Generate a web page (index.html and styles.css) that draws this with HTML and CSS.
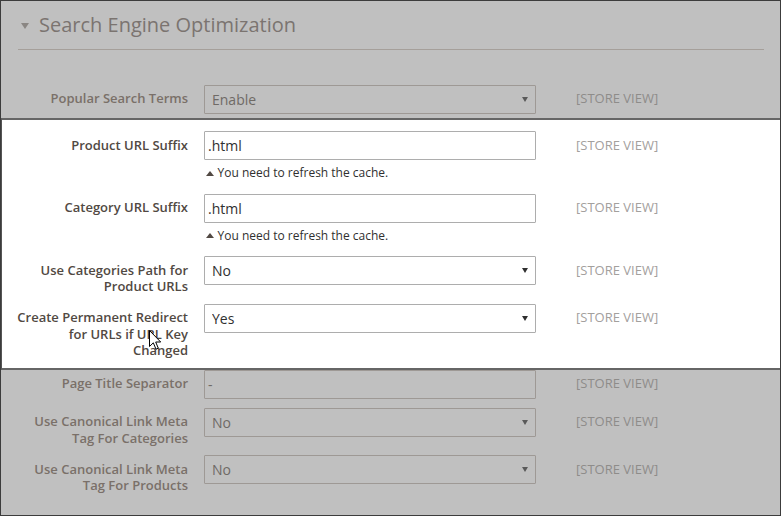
FILE: index.html
```html
<!DOCTYPE html>
<html lang="en">
<head>
<meta charset="utf-8">
<title>Search Engine Optimization</title>
<link rel="stylesheet" href="styles.css">
</head>
<body>
<div class="frame">
  <section class="dim dim--top">
    <header class="sec-head">
      <span class="caret"></span>
      <h2 class="sec-title">Search Engine Optimization</h2>
    </header>
    <div class="rows rows--top">
      <div class="row row--first">
        <label class="label">Popular Search Terms</label>
        <div class="control">
          <span class="select-wrap"><select class="field select"><option>Enable</option></select></span>
        </div>
        <div class="scope">[STORE VIEW]</div>
      </div>
    </div>
  </section>

  <section class="focus">
    <div class="row row--note">
      <label class="label">Product URL Suffix</label>
      <div class="control">
        <input class="field input" type="text" value=".html">
        <div class="note">You need to refresh the cache.</div>
      </div>
      <div class="scope">[STORE VIEW]</div>
    </div>
    <div class="row row--note">
      <label class="label">Category URL Suffix</label>
      <div class="control">
        <input class="field input" type="text" value=".html">
        <div class="note">You need to refresh the cache.</div>
      </div>
      <div class="scope">[STORE VIEW]</div>
    </div>
    <div class="row">
      <label class="label">Use Categories Path for Product URLs</label>
      <div class="control">
        <span class="select-wrap"><select class="field select"><option>No</option></select></span>
      </div>
      <div class="scope">[STORE VIEW]</div>
    </div>
    <div class="row">
      <label class="label">Create Permanent Redirect for URLs if URL Key Changed</label>
      <div class="control">
        <span class="select-wrap"><select class="field select"><option>Yes</option></select></span>
      </div>
      <div class="scope">[STORE VIEW]</div>
    </div>
  </section>

  <section class="dim dim--bottom">
    <div class="row">
      <label class="label">Page Title Separator</label>
      <div class="control">
        <input class="field input" type="text" value="-">
      </div>
      <div class="scope">[STORE VIEW]</div>
    </div>
    <div class="row">
      <label class="label">Use Canonical Link Meta Tag For Categories</label>
      <div class="control">
        <span class="select-wrap"><select class="field select"><option>No</option></select></span>
      </div>
      <div class="scope">[STORE VIEW]</div>
    </div>
    <div class="row">
      <label class="label">Use Canonical Link Meta Tag For Products</label>
      <div class="control">
        <span class="select-wrap"><select class="field select"><option>No</option></select></span>
      </div>
      <div class="scope">[STORE VIEW]</div>
    </div>
  </section>

  <svg class="cursor" width="13" height="21" viewBox="0 0 13 21" aria-hidden="true">
    <path d="M0.5 0.5 L0.5 16.5 L4.3 12.8 L7 19.2 L9.3 18.2 L6.7 12 L11.7 12 Z" fill="#fff" stroke="#000" stroke-width="1" stroke-linejoin="miter"/>
  </svg>
</div>
</body>
</html>
```

FILE: styles.css
```css
* { box-sizing: border-box; }

html, body {
  margin: 0;
  padding: 0;
  background: #c0c0c0;
}

body {
  font-family: "Open Sans", "Liberation Sans", Arial, sans-serif;
}

.frame {
  position: relative;
  width: 781px;
  height: 516px;
  border: 1px solid #3c3c3c;
  display: flex;
  flex-direction: column;
  overflow: hidden;
  background: #c0c0c0;
}

/* ---------- sections ---------- */
.dim {
  background: #c0c0c0;
}

.dim--bottom {
  flex: 1;
  padding-left: 16px;
}

.rows--top {
  padding: 35px 0 0 16px;
}

.focus {
  background: #ffffff;
  border-top: 2px solid #666666;
  border-bottom: 2px solid #666666;
  border-left: 1px solid #555555;
  padding: 11px 0 0 15px;
}

/* ---------- header ---------- */
.sec-head {
  display: flex;
  align-items: center;
  margin: 0 16px 0 17px;
  padding: 9.5px 0 10px;
  border-bottom: 1px solid #a59f9a;
}

.caret {
  width: 0;
  height: 0;
  border-left: 4.5px solid transparent;
  border-right: 4.5px solid transparent;
  border-top: 6px solid #8a8683;
  margin: 3px 10px 0 3px;
}

.sec-title {
  margin: 0;
  font-size: 20px;
  line-height: 28px;
  font-weight: 400;
  color: #7b7470;
}

/* ---------- rows ---------- */
.row {
  display: grid;
  grid-template-columns: 171px 332px auto;
  column-gap: 16px;
  align-items: start;
}

.label {
  text-align: right;
  font-size: 13px;
  line-height: 16.5px;
  font-weight: 600;
  padding: 5.5px 0 9px;
  color: #514943;
}

.control {
  padding-bottom: 9px;
}

.row--first .control {
  padding-bottom: 4.5px;
}

.row--note .control {
  padding-bottom: 12.5px;
}

.scope {
  margin-left: 24px;
  padding-top: 5.5px;
  font-size: 13px;
  line-height: 17px;
  color: #a3a09d;
  white-space: nowrap;
}

/* ---------- fields ---------- */
.field {
  display: block;
  width: 332px;
  height: 29px;
  margin: 0;
  border: 1px solid #adadad;
  border-radius: 1px;
  background: #ffffff;
  font-family: "Open Sans", "Liberation Sans", Arial, sans-serif;
  font-size: 14px;
  color: #303030;
  outline: none;
}

.input {
  padding: 0 3px;
}

.select-wrap {
  position: relative;
  display: block;
  width: 332px;
}

.select {
  appearance: none;
  -webkit-appearance: none;
  padding: 0 24px 0 7px;
  line-height: 27px;
}

.select-wrap::after {
  content: "";
  position: absolute;
  right: 8px;
  top: 12px;
  width: 0;
  height: 0;
  border-left: 3px solid transparent;
  border-right: 3px solid transparent;
  border-top: 5px solid #303030;
  pointer-events: none;
}

.note {
  display: flex;
  align-items: center;
  margin-top: 5px;
  padding-left: 2px;
  font-size: 12px;
  line-height: 16px;
  color: #303030;
}

.note::before {
  content: "";
  width: 0;
  height: 0;
  border-left: 4.5px solid transparent;
  border-right: 4.5px solid transparent;
  border-bottom: 5px solid #514943;
  margin-right: 3.5px;
}

/* ---------- dimmed colours ---------- */
.dim .label { color: #7a7069; }
.dim .scope { color: #8e8c8a; }
.dim .field {
  background: #c0c0c0;
  border-color: #9e9995;
  color: #6f6a66;
}
.dim .select-wrap::after { border-top-color: #5a5a5a; }

/* ---------- cursor ---------- */
.cursor {
  position: absolute;
  left: 148px;
  top: 329px;
}
```
